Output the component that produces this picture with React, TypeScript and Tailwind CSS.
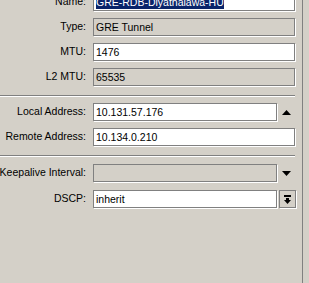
import React from 'react';

type FieldProps = {
    value?: string;
    disabled?: boolean;
    short?: boolean;
    selected?: boolean;
};

function Field({ value = '', disabled, short, selected }: FieldProps) {
    return (
        <div
            className={`h-[18px] border border-[#808080] shadow-[1px_1px_0_#ffffff] flex items-center pl-[2px] overflow-hidden whitespace-nowrap ${short ? 'w-[184px]' : 'w-[202px]'} ${disabled ? 'bg-[#d4d0c8]' : 'bg-white'}`}
        >
            {selected ? (
                <span className="bg-[#0a246a] text-white leading-[14px]">{value}</span>
            ) : (
                <span className="leading-[14px]">{value}</span>
            )}
        </div>
    );
}

function Row({ label, children }: { label: string; children: React.ReactNode }) {
    return (
        <div className="flex items-center h-[18px]">
            <div className="w-[86px] shrink-0 text-right whitespace-nowrap flex justify-end">
                <span>{label}</span>
            </div>
            <div className="w-[7px] shrink-0" />
            {children}
        </div>
    );
}

function Separator() {
    return (
        <div className="w-[295px]">
            <div className="h-px bg-[#808080]" />
            <div className="h-px bg-white" />
        </div>
    );
}

export default function App() {
    return (
        <div
            className="relative w-[309px] h-[283px] overflow-hidden bg-[#d4d0c8] text-black text-[10.5px]"
            style={{ fontFamily: '"Liberation Sans", Arial, sans-serif' }}
        >
            <div className="flex flex-col mt-[-7px]">
                <Row label="Name:">
                    <Field value="GRE-RDB-Diyathalawa-HU" selected />
                </Row>
                <div className="h-[7px]" />
                <Row label="Type:">
                    <Field value="GRE Tunnel" disabled />
                </Row>
                <div className="h-[7px]" />
                <Row label="MTU:">
                    <Field value="1476" />
                </Row>
                <div className="h-[7px]" />
                <Row label="L2 MTU:">
                    <Field value="65535" disabled />
                </Row>

                <div className="h-[9px]" />
                <Separator />
                <div className="h-[6px]" />

                <Row label="Local Address:">
                    <Field value="10.131.57.176" short />
                    <div className="w-[18px] flex justify-center items-center">
                        <svg width="9" height="5" viewBox="0 0 9 5">
                            <path d="M4.5 0 L9 5 L0 5 Z" fill="#000" />
                        </svg>
                    </div>
                </Row>
                <div className="h-[7px]" />
                <Row label="Remote Address:">
                    <Field value="10.134.0.210" />
                </Row>

                <div className="h-[9px]" />
                <Separator />
                <div className="h-[7px]" />

                <Row label="Keepalive Interval:">
                    <Field disabled short />
                    <div className="w-[18px] flex justify-center items-center">
                        <svg width="9" height="5" viewBox="0 0 9 5">
                            <path d="M0 0 L9 0 L4.5 5 Z" fill="#000" />
                        </svg>
                    </div>
                </Row>
                <div className="h-[8px]" />
                <Row label="DSCP:">
                    <Field value="inherit" short />
                    <div className="w-[2px]" />
                    <div className="w-[17px] h-[18px] border border-[#808080] shadow-[1px_1px_0_#ffffff] flex items-center justify-center">
                        <svg width="7" height="9" viewBox="0 0 7 9">
                            <rect x="0" y="0" width="7" height="2" fill="#000" />
                            <rect x="2" y="3" width="3" height="2" fill="#000" />
                            <path d="M0 5 L7 5 L3.5 9 Z" fill="#000" />
                        </svg>
                    </div>
                </Row>
            </div>

            <div className="absolute top-0 bottom-0 left-[302px] w-px bg-[#808080]" />
        </div>
    );
}
